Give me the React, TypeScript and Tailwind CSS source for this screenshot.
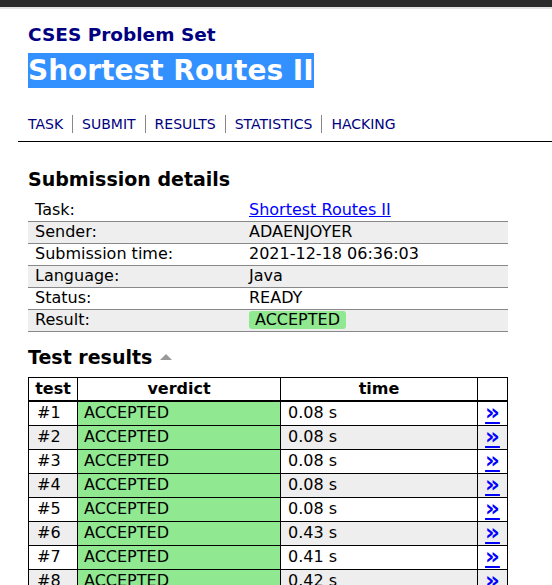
import React from "react";

const details: [string, string][] = [
  ["Task:", "link"],
  ["Sender:", "ADAENJOYER"],
  ["Submission time:", "2021-12-18 06:36:03"],
  ["Language:", "Java"],
  ["Status:", "READY"],
  ["Result:", "badge"],
];

const tests = [
  ["#1", "0.08 s"],
  ["#2", "0.08 s"],
  ["#3", "0.08 s"],
  ["#4", "0.08 s"],
  ["#5", "0.08 s"],
  ["#6", "0.43 s"],
  ["#7", "0.41 s"],
  ["#8", "0.42 s"],
  ["#9", "0.41 s"],
];

const nav = ["TASK", "SUBMIT", "RESULTS", "STATISTICS", "HACKING"];

export default function App() {
  return (
    <div className="min-h-screen bg-white text-black" style={{ fontFamily: '"DejaVu Sans", Verdana, sans-serif' }}>
      {/* top bar */}
      <div className="h-[7px] bg-[#2b2b2b]" />
      <div className="h-[2px] bg-[#e4e4e4]" />

      <div className="pl-[28px] pt-[14px]">
        <div className="text-[18.5px] font-bold leading-[24px] text-[#000080]">CSES Problem Set</div>
        <div className="mt-[6px] leading-[35px]">
          <span className="bg-[#3390ff] text-white text-[28px] font-bold py-[1px]">Shortest Routes II</span>
        </div>
      </div>

      <div className="ml-[18px] mt-[23px] border-b border-black pl-[10px] pb-[8px]">
        <div className="flex text-[14px] leading-[18px] text-[#000080]">
          {nav.map((n, i) => (
            <span key={n} className={i === 0 ? "pr-[9px]" : "border-l border-[#888] px-[9px]"}>
              {n}
            </span>
          ))}
        </div>
      </div>

      <div className="pl-[28px] w-[508px]">
        <h2 className="mt-[25px] text-[19px] font-bold leading-[24px]">Submission details</h2>
        <table className="mt-[8px] w-[480px] border-collapse text-[16px]">
          <tbody>
            {details.map(([k, v], i) => (
              <tr key={k} className={`h-[22px] ${i % 2 === 1 ? "bg-[#eeeeee]" : ""} ${i > 0 ? "border-t border-[#888]" : ""} ${i === details.length - 1 ? "border-b border-[#888]" : ""}`}>
                <td className="w-[221px] pl-[7px] py-0 leading-[20px]">{k}</td>
                <td className="py-0 leading-[20px]">
                  {v === "link" ? (
                    <span className="text-[#0000ff] underline">Shortest Routes II</span>
                  ) : v === "badge" ? (
                    <span className="inline-block rounded-[3px] bg-[#90e890] px-[6px] leading-[18px]">ACCEPTED</span>
                  ) : (
                    v
                  )}
                </td>
              </tr>
            ))}
          </tbody>
        </table>

        <h2 className="mt-[13px] text-[19px] font-bold leading-[24px] flex items-center">
          Test results
          <svg width="12" height="8" viewBox="0 0 12 8" className="ml-[8px] mt-[1px]">
            <polygon points="0,7 6,1 12,7" fill="#999" />
          </svg>
        </h2>
        <table className="mt-[8px] w-[480px] border-collapse border border-black text-[16px]">
          <thead>
            <tr className="h-[24px] border-b-2 border-black">
              <th className="w-[49px] border border-black text-center font-bold leading-[21px]">test</th>
              <th className="w-[203px] border border-black text-center font-bold leading-[21px]">verdict</th>
              <th className="border border-black text-center font-bold leading-[21px]">time</th>
              <th className="w-[30px] border border-black"></th>
            </tr>
          </thead>
          <tbody>
            {tests.map(([n, t], i) => (
              <tr key={n} className={`h-[24px] ${i % 2 === 1 ? "bg-[#eeeeee]" : ""}`}>
                <td className="border border-black pl-[8px] py-0 leading-[22px]">{n}</td>
                <td className="border border-black bg-[#90e890] pl-[6px] py-0 leading-[22px]">ACCEPTED</td>
                <td className="border border-black pl-[7px] py-0 leading-[22px]">{t}</td>
                <td className="border border-black py-0 text-center leading-[22px]">
                  <span className="inline-block h-[22px] align-top text-[23px] font-bold leading-[20px] text-[#0000ff] underline">»</span>
                </td>
              </tr>
            ))}
          </tbody>
        </table>
      </div>
    </div>
  );
}
